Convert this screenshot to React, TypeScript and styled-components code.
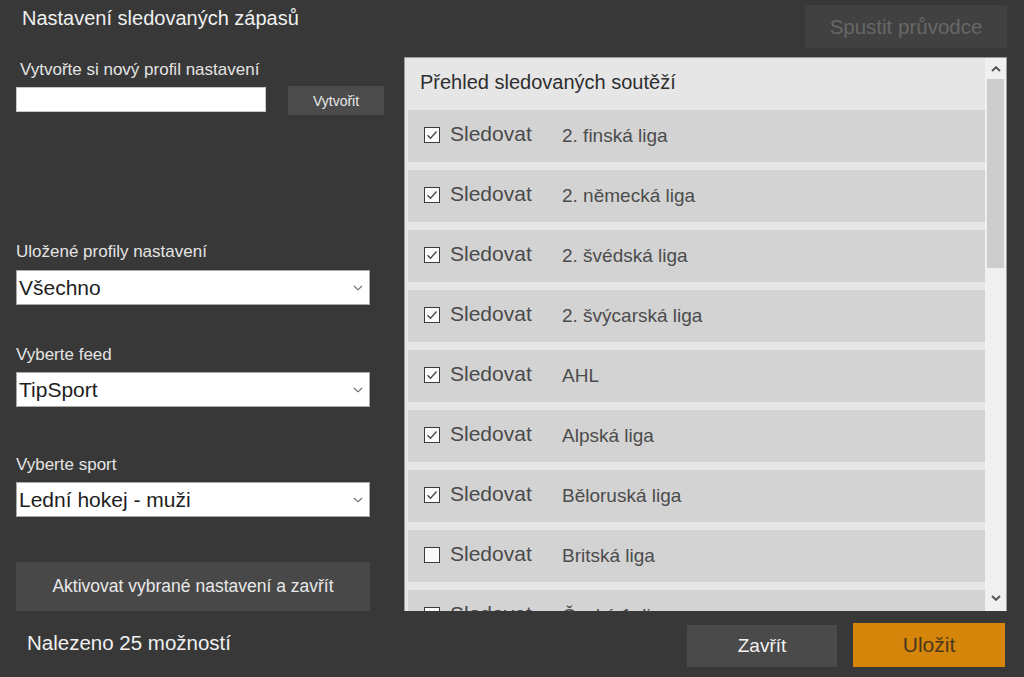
import styled, { createGlobalStyle } from 'styled-components';

const GlobalStyle = createGlobalStyle`
  html, body {
    margin: 0;
    padding: 0;
    background: #383838;
  }
  * {
    box-sizing: border-box;
  }
`;

const font = `"Liberation Sans", Arial, sans-serif`;

const Root = styled.div`
  width: 1024px;
  height: 677px;
  background: #383838;
  font-family: ${font};
  padding: 5px 17px 0 16px;
  display: flex;
  flex-direction: column;
  overflow: hidden;
`;

const Header = styled.div`
  display: flex;
  justify-content: space-between;
  align-items: flex-start;
  height: 43px;
  margin-bottom: 9px;
`;

const Title = styled.div`
  color: #f0f0f0;
  font-size: 20px;
  line-height: 26px;
  padding-left: 6px;
`;

const GhostButton = styled.button`
  width: 202px;
  height: 43px;
  border: none;
  background: #414141;
  color: #676767;
  font-family: ${font};
  font-size: 20.5px;
  padding: 0;
`;

const Body = styled.div`
  display: flex;
  gap: 34px;
  height: 554px;
`;

const LeftColumn = styled.div`
  width: 354px;
  flex: none;
  display: flex;
  flex-direction: column;
`;

const Field = styled.div<{ $top: number }>`
  display: flex;
  flex-direction: column;
  margin-top: ${({ $top }) => $top}px;
`;

const FieldLabel = styled.div<{ $gap: number; $indent?: number }>`
  color: #e4e4e4;
  font-size: 17px;
  line-height: 18px;
  margin-bottom: ${({ $gap }) => $gap}px;
  padding-left: ${({ $indent }) => $indent ?? 0}px;
`;

const InputRow = styled.div`
  display: flex;
  align-items: flex-start;
  gap: 22px;
  width: 368px;
`;

const TextInput = styled.input`
  flex: none;
  width: 250px;
  height: 25px;
  margin-top: 1px;
  border: 1px solid #c8c8c8;
  background: #fff;
  padding: 0 4px;
  font-family: ${font};
  font-size: 15px;
  outline: none;
`;

const SmallButton = styled.button`
  flex: none;
  width: 96px;
  height: 29px;
  border: none;
  background: #4b4b4b;
  color: #e8e8e8;
  font-family: ${font};
  font-size: 14px;
  padding: 0;
`;

const SelectBox = styled.div`
  height: 35px;
  background: #fff;
  border: 1px solid #a8a8a8;
  display: flex;
  align-items: center;
  justify-content: space-between;
  padding: 0 6px 0 2px;
`;

const SelectValue = styled.span`
  color: #1e1e1e;
  font-size: 21px;
`;

const ActivateButton = styled.button`
  margin-top: auto;
  height: 49px;
  width: 354px;
  border: none;
  background: #484848;
  color: #e8e8e8;
  font-family: ${font};
  font-size: 17.5px;
  padding: 0;
`;

const Panel = styled.div`
  width: 603px;
  height: 554px;
  border: 1px solid #9c9c9c;
  border-bottom: none;
  background: #e6e6e6;
  display: flex;
`;

const PanelContent = styled.div`
  flex: 1;
  overflow: hidden;
  display: flex;
  flex-direction: column;
`;

const PanelHeader = styled.div`
  flex: none;
  height: 48px;
  line-height: 48px;
  padding-left: 15px;
  font-size: 20px;
  color: #2e2e2e;
`;

const List = styled.div`
  display: flex;
  flex-direction: column;
  gap: 8px;
  padding: 4px 0 0 3px;
`;

const Row = styled.div`
  flex: none;
  height: 52px;
  background: #d3d3d3;
  display: flex;
  align-items: center;
  padding: 0 0 4px 16px;
`;

const CheckBox = styled.span`
  width: 16px;
  height: 16px;
  border: 1px solid #3c3c3c;
  background: #fafafa;
  display: flex;
  align-items: center;
  justify-content: center;
  margin-right: 10px;
  margin-top: 2px;
`;

const WatchLabel = styled.span`
  width: 112px;
  color: #4a4a4a;
  font-size: 21px;
`;

const LeagueName = styled.span`
  color: #4c4c4c;
  font-size: 19px;
  margin-top: 4px;
`;

const Scrollbar = styled.div`
  width: 21px;
  flex: none;
  background: #f0f0f0;
  display: flex;
  flex-direction: column;
  align-items: center;
`;

const ScrollArrow = styled.div<{ $bottom?: boolean }>`
  height: 21px;
  width: 100%;
  display: flex;
  align-items: center;
  justify-content: center;
  margin-top: ${({ $bottom }) => ($bottom ? 'auto' : '0')};
  margin-bottom: ${({ $bottom }) => ($bottom ? '3px' : '0')};
`;

const ScrollThumb = styled.div`
  width: 17px;
  height: 189px;
  background: #cdcdcd;
`;

const Footer = styled.div`
  display: flex;
  justify-content: space-between;
  align-items: center;
  height: 44px;
  margin-top: 12px;
`;

const Count = styled.div`
  color: #f0f0f0;
  font-size: 20.5px;
  padding-left: 11px;
  margin-top: -4px;
`;

const ButtonGroup = styled.div`
  display: flex;
  align-items: flex-end;
  gap: 16px;
  height: 44px;
  margin-right: 2px;
`;

const CloseButton = styled.button`
  border: none;
  padding: 0;
  width: 150px;
  height: 42px;
  background: #4a4a4a;
  color: #f2f2f2;
  font-family: ${font};
  font-size: 19px;
`;

const SaveButton = styled(CloseButton)`
  width: 152px;
  height: 44px;
  background: #d4850a;
`;

const SaveLabel = styled.span`
  color: #4a381c;
  font-size: 21px;
`;

function Chevron({ up, size = 10, color = '#555', width = 1.4 }: { up?: boolean; size?: number; color?: string; width?: number }) {
  return (
    <svg width={size} height={size * 0.6} viewBox="0 0 10 6">
      <path
        d={up ? 'M1 5 L5 1.2 L9 5' : 'M1 1 L5 4.8 L9 1'}
        fill="none"
        stroke={color}
        strokeWidth={width}
      />
    </svg>
  );
}

function Check() {
  return (
    <svg width="12" height="10" viewBox="0 0 12 10">
      <path d="M1.5 5.2 L4.5 8.2 L10.5 1.5" fill="none" stroke="#4a4a4a" strokeWidth="1.4" />
    </svg>
  );
}

const leagues = [
  { name: '2. finská liga', on: true },
  { name: '2. německá liga', on: true },
  { name: '2. švédská liga', on: true },
  { name: '2. švýcarská liga', on: true },
  { name: 'AHL', on: true },
  { name: 'Alpská liga', on: true },
  { name: 'Běloruská liga', on: true },
  { name: 'Britská liga', on: false },
  { name: 'Česká 1. liga', on: false },
];

function Select({ value }: { value: string }) {
  return (
    <SelectBox>
      <SelectValue>{value}</SelectValue>
      <Chevron size={10} color="#666" width={1.1} />
    </SelectBox>
  );
}

export default function App() {
  return (
    <>
      <GlobalStyle />
      <Root>
        <Header>
          <Title>Nastavení sledovaných zápasů</Title>
          <GhostButton>Spustit průvodce</GhostButton>
        </Header>
        <Body>
          <LeftColumn>
            <Field $top={4}>
              <FieldLabel $gap={7} $indent={4}>Vytvořte si nový profil nastavení</FieldLabel>
              <InputRow>
                <TextInput />
                <SmallButton>Vytvořit</SmallButton>
              </InputRow>
            </Field>
            <Field $top={128}>
              <FieldLabel $gap={9}>Uložené profily nastavení</FieldLabel>
              <Select value="Všechno" />
            </Field>
            <Field $top={41}>
              <FieldLabel $gap={8}>Vyberte feed</FieldLabel>
              <Select value="TipSport" />
            </Field>
            <Field $top={49}>
              <FieldLabel $gap={8}>Vyberte sport</FieldLabel>
              <Select value="Lední hokej - muži" />
            </Field>
            <ActivateButton>Aktivovat vybrané nastavení a zavřít</ActivateButton>
          </LeftColumn>
          <Panel>
            <PanelContent>
              <PanelHeader>Přehled sledovaných soutěží</PanelHeader>
              <List>
                {leagues.map((l) => (
                  <Row key={l.name}>
                    <CheckBox>{l.on && <Check />}</CheckBox>
                    <WatchLabel>Sledovat</WatchLabel>
                    <LeagueName>{l.name}</LeagueName>
                  </Row>
                ))}
              </List>
            </PanelContent>
            <Scrollbar>
              <ScrollArrow>
                <Chevron up size={10} color="#555" width={2} />
              </ScrollArrow>
              <ScrollThumb />
              <ScrollArrow $bottom>
                <Chevron size={10} color="#555" width={2} />
              </ScrollArrow>
            </Scrollbar>
          </Panel>
        </Body>
        <Footer>
          <Count>Nalezeno 25 možností</Count>
          <ButtonGroup>
            <CloseButton>Zavřít</CloseButton>
            <SaveButton>
              <SaveLabel>Uložit</SaveLabel>
            </SaveButton>
          </ButtonGroup>
        </Footer>
      </Root>
    </>
  );
}
